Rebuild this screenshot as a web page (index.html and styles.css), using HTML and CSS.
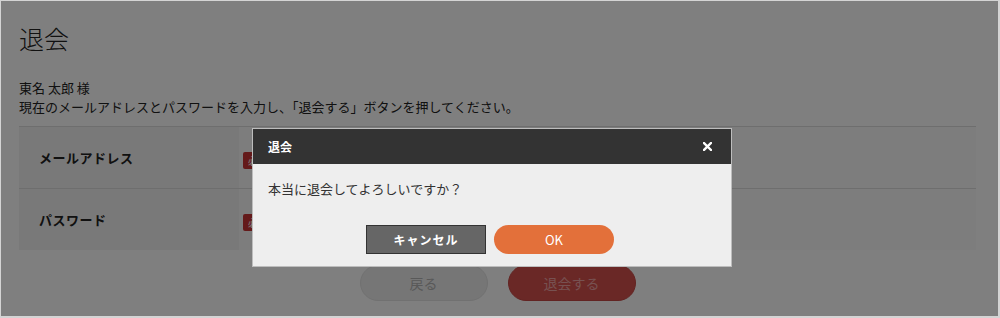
FILE: index.html
```html
<!DOCTYPE html>
<html lang="ja">
  <head>
    <meta charset="UTF-8" />
    <meta name="viewport" content="width=device-width, initial-scale=1.0" />
    <title>退会</title>
    <link rel="stylesheet" href="styles.css">
  </head>
  <body>
    <div class="frame">
      <main class="page">
        <h1>退会</h1>
        <p class="intro">
          東名 太郎 様<br />
          現在のメールアドレスとパスワードを入力し、「退会する」ボタンを押してください。
        </p>
        <table class="form-table">
          <tr>
            <th>メールアドレス</th>
            <td><span class="required">必須</span></td>
          </tr>
          <tr>
            <th>パスワード</th>
            <td><span class="required">必須</span></td>
          </tr>
        </table>
        <div class="actions">
          <button class="btn btn-back">戻る</button>
          <button class="btn btn-withdraw">退会する</button>
        </div>
      </main>

      <div class="overlay"></div>

      <div class="modal">
        <div class="modal-header">
          <span>退会</span>
          <svg class="close" width="9" height="9" viewBox="0 0 9 9">
            <path d="M1 1 L8 8 M8 1 L1 8" stroke="#fff" stroke-width="2.4" stroke-linecap="square" />
          </svg>
        </div>
        <div class="modal-body">
          <p>本当に退会してよろしいですか？</p>
          <div class="modal-actions">
            <button class="btn-cancel">キャンセル</button>
            <button class="btn-ok">OK</button>
          </div>
        </div>
      </div>
    </div>
  </body>
</html>
```

FILE: styles.css
```css
body {
  margin: 0;
  font-family: "Noto Sans CJK JP", "Noto Sans", sans-serif;
  color: #222;
  background-color: #fff;
}

.frame {
  position: relative;
  width: 1000px;
  height: 318px;
  box-sizing: border-box;
  border: 1px solid #d4d4d4;
  border-right-width: 2px;
  border-bottom-width: 2px;
  overflow: hidden;
}

.page {
  padding: 0 22px 0 18px;
}

h1 {
  margin: 22px 0 0;
  font-size: 25px;
  line-height: 30px;
  font-weight: 300;
}

.intro {
  margin: 25px 0 0;
  font-size: 13px;
  line-height: 19px;
}

.form-table {
  width: 100%;
  margin-top: 10px;
  border-collapse: collapse;
}

.form-table tr {
  border-top: 1px solid #dcdcdc;
}

.form-table th {
  width: 200px;
  height: 61px;
  padding: 0 0 0 20px;
  text-align: left;
  font-size: 13px;
  font-weight: bold;
  letter-spacing: 0.5px;
  background-color: #f3f3f3;
}

.form-table td {
  padding: 0 0 0 4px;
  background-color: #fbfbfb;
}

.required {
  display: inline-block;
  padding: 0 5px;
  height: 17px;
  line-height: 17px;
  font-size: 10px;
  color: #fff;
  background-color: #c93434;
  border-radius: 2px;
  vertical-align: middle;
}

.actions {
  display: flex;
  justify-content: center;
  gap: 20px;
  margin-top: 15px;
}

.btn {
  width: 128px;
  height: 36px;
  border-radius: 18px;
  font-family: inherit;
  font-size: 14px;
}

.btn-back {
  background-color: #ececec;
  border: 1px solid #e2e2e2;
  color: #b2b2b2;
}

.btn-withdraw {
  background-color: #d5504c;
  border: 1px solid #c44844;
  color: #eea2a2;
}

.overlay {
  position: absolute;
  inset: 0;
  background-color: rgba(0, 0, 0, 0.5);
}

.modal {
  position: absolute;
  left: 251px;
  top: 127px;
  width: 480px;
  box-sizing: border-box;
  border: 1px solid #bdbdbd;
  background-color: #eee;
}

.modal-header {
  display: flex;
  align-items: center;
  justify-content: space-between;
  height: 35px;
  padding: 0 19px 0 15px;
  background-color: #333;
  color: #fff;
  font-size: 12px;
  font-weight: bold;
}

.modal-body {
  padding: 15px 15px 12px;
}

.modal-body p {
  margin: 0;
  font-size: 13px;
  line-height: 20px;
  color: #333;
}

.modal-actions {
  display: flex;
  justify-content: center;
  gap: 8px;
  margin-top: 26px;
  padding-right: 4px;
}

.modal-actions button {
  width: 120px;
  height: 29px;
  font-family: inherit;
  color: #fff;
}

.btn-cancel {
  background-color: #666;
  border: 1px solid #333;
  font-size: 12px;
  font-weight: bold;
  letter-spacing: 1px;
}

.btn-ok {
  background-color: #e3703a;
  border: none;
  border-radius: 15px;
  font-size: 13px;
}
```
